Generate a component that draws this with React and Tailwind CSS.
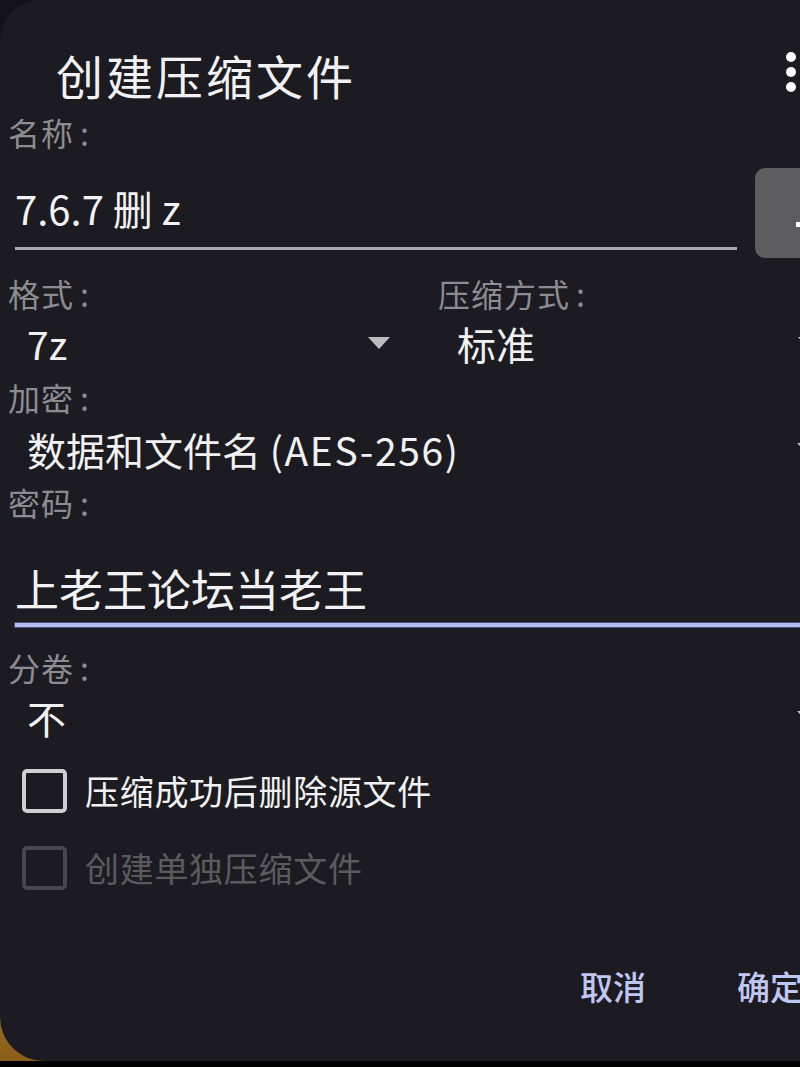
import React from "react";

const font = { fontFamily: "'Noto Sans CJK SC', 'Noto Sans', sans-serif" };

const Label = ({ text, className = "" }) => (
    <div className={`h-[32px] pl-[8px] text-[32px] leading-none tracking-[1px] text-[#8c8c91] whitespace-nowrap ${className}`}>
        {text}
        <span className="ml-[6px]">:</span>
    </div>
);

const Caret = () => (
    <svg className="w-[22px] h-[12px] shrink-0" viewBox="0 0 22 12">
        <path d="M0 0h22L11 12z" fill="#bdbdc0" />
    </svg>
);

const Spinner = ({ value, width = "w-[430px]" }) => (
    <div className={`${width} shrink-0 h-[40px] flex items-center pl-[19px] pr-[48px]`}>
        <span className="text-[39px] leading-none text-[#f1f1f3] whitespace-nowrap">{value}</span>
        <span className="ml-auto">
            <Caret />
        </span>
    </div>
);

const Check = ({ label, disabled }) => (
    <div className="h-[44px] flex items-center pl-[22px] gap-[18px]">
        <div
            className={`w-[45px] h-[44px] rounded-[5px] border-[4px] ${disabled ? "border-[#48484c]" : "border-[#cfcfd2]"}`}
        />
        <span className={`text-[34px] leading-none tracking-[0.7px] whitespace-nowrap ${disabled ? "text-[#5b5b5f]" : "text-[#f1f1f3]"}`}>
            {label}
        </span>
    </div>
);

export default function App() {
    return (
        <div className="w-[800px] h-[1067px] bg-black flex flex-col overflow-hidden" style={font}>
            <div className="flex-1 bg-[linear-gradient(to_bottom,#131218_0%,#131218_92%,#97681e_96%,#8a5f1b_100%)]">
                <div className="h-full bg-[#1c1b21] rounded-tl-[40px] rounded-bl-[44px] flex flex-col overflow-hidden">
                    {/* title */}
                    <div className="mt-[51px] h-[46px] flex items-center justify-between pl-[56px] pr-[4px]">
                        <h1 className="text-[47px] leading-none tracking-[3px] text-[#f2f2f4] whitespace-nowrap">创建压缩文件</h1>
                        <div className="flex flex-col gap-[5px] -mt-[4px]">
                            <span className="w-[10px] h-[10px] rounded-full bg-white" />
                            <span className="w-[10px] h-[10px] rounded-full bg-white" />
                            <span className="w-[10px] h-[10px] rounded-full bg-white" />
                        </div>
                    </div>

                    <Label text="名称" className="mt-[19px]" />

                    <div className="mt-[20px] h-[90px] flex">
                        <div className="ml-[15px] w-[722px] shrink-0 flex flex-col">
                            <div className="mt-[20px] h-[40px] text-[40px] leading-none text-[#f2f2f4] whitespace-nowrap">7.6.7 删 z</div>
                            <div className="mt-[19px] h-[3px] bg-[#a9a9ad]" />
                        </div>
                        <button className="ml-[18px] w-[100px] h-[90px] shrink-0 rounded-[10px] bg-[#5d5d60] flex items-center justify-center">
                            <span className="w-[5px] h-[5px] mt-[22px] -ml-[14px] bg-white" />
                        </button>
                    </div>

                    <div className="mt-[19px] flex">
                        <Label text="格式" className="w-[430px] shrink-0" />
                        <Label text="压缩方式" className="shrink-0" />
                    </div>
                    <div className="mt-[14px] flex pl-[8px]">
                        <Spinner value="7z" />
                        <Spinner value="标准" />
                    </div>

                    <Label text="加密" className="mt-[18px]" />
                    <div className="mt-[16px] flex pl-[8px]">
                        <Spinner
                            value={
                                <>
                                    数据和文件名 <span className="tracking-[1.6px]">(AES-256)</span>
                                </>
                            }
                            width="w-[859px]"
                        />
                    </div>

                    <Label text="密码" className="mt-[17px]" />
                    <div className="mt-[48px] pl-[15px] flex flex-col">
                        <div className="h-[44px] text-[44px] leading-none text-[#f2f2f4] whitespace-nowrap">上老王论坛当老王</div>
                        <div className="mt-[13px] h-[4px] bg-[#b6bdf4] shadow-[0_0_0_1px_#4a4f78]" />
                    </div>

                    <Label text="分卷" className="mt-[24px]" />
                    <div className="mt-[14px] flex pl-[8px]">
                        <Spinner value="不" width="w-[859px]" />
                    </div>

                    <div className="mt-[32px]">
                        <Check label="压缩成功后删除源文件" />
                    </div>
                    <div className="mt-[33px]">
                        <Check label="创建单独压缩文件" disabled />
                    </div>

                    <div className="mt-[80px] flex pl-[580px] gap-[91px]">
                        <span className="text-[33px] leading-none font-medium text-[#c0c6f2] whitespace-nowrap">取消</span>
                        <span className="text-[33px] leading-none font-medium text-[#c0c6f2] whitespace-nowrap">确定</span>
                    </div>
                </div>
            </div>
            <div className="h-[6px] bg-black shrink-0" />
        </div>
    );
}
